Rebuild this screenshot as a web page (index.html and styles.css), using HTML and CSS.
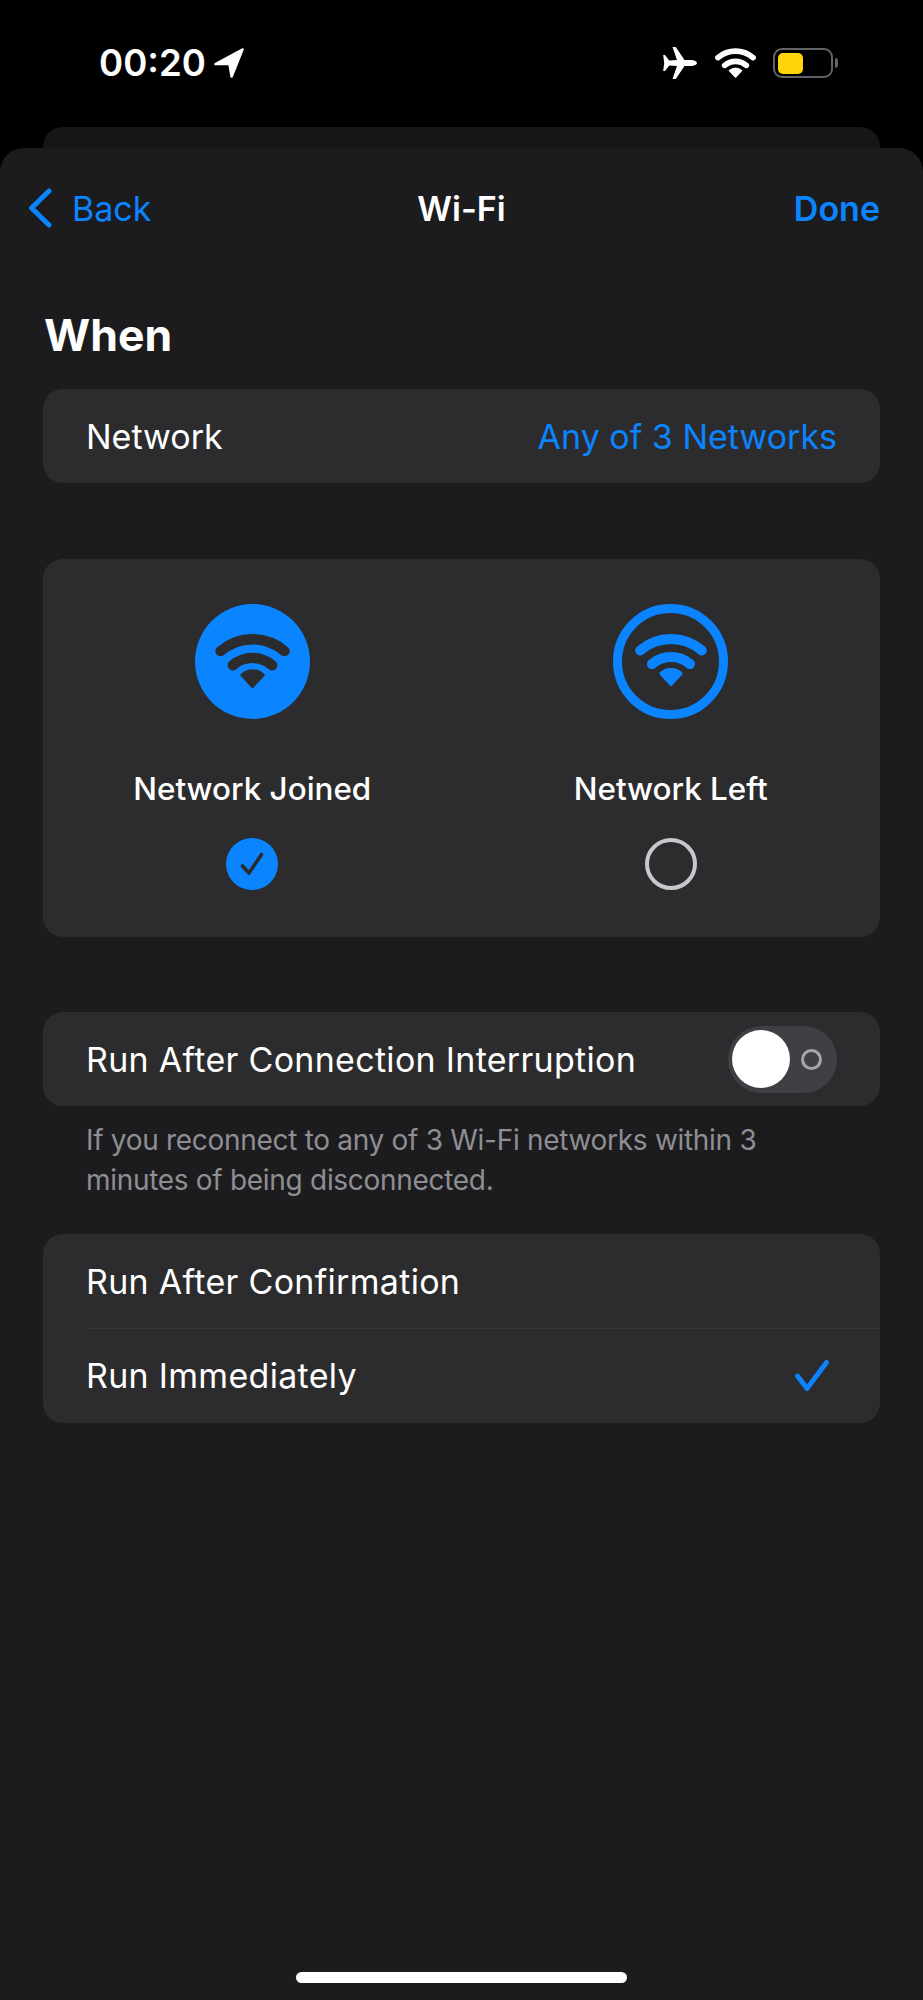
FILE: index.html
```html
<!DOCTYPE html>
<html lang="en">
<head>
    <meta charset="UTF-8">
    <meta name="viewport" content="width=device-width, initial-scale=1.0">
    <title>Wi-Fi</title>
    <link rel="stylesheet" href="styles.css">
</head>
<body>
    <svg class="defs" width="0" height="0">
        <symbol id="wifi" viewBox="0 0 72 52">
            <path d="M5.2 16.5A47 47 0 0 1 66.8 16.5" fill="none" stroke="currentColor" stroke-width="10" stroke-linecap="round"/>
            <path d="M17 30.1A29 29 0 0 1 55 30.1" fill="none" stroke="currentColor" stroke-width="10" stroke-linecap="round"/>
            <path d="M36 50.5L25.8 39.5A15 15 0 0 1 46.2 39.5Z" fill="currentColor" stroke="currentColor" stroke-width="3" stroke-linejoin="round"/>
        </symbol>
    </svg>

    <div class="status-bar">
        <div class="status-left">
            <span class="time">00:20</span>
            <svg class="location" viewBox="0 0 29 29"><path d="M27.5 1.5L1.5 15.5L15 15.5L17 27.5Z" fill="#fff" stroke="#fff" stroke-width="2.5" stroke-linejoin="round"/></svg>
        </div>
        <div class="status-right">
            <svg class="plane" viewBox="0 0 34 32"><path d="M34 16C34 14.3 30.5 13 28 13H21.5L12.8 0H9.5L14 13L6.2 13.5L2 8H.2L1.2 16L.2 24H2L6.2 18.5L14 19L9.5 32H12.8L21.5 19H28C30.5 19 34 17.7 34 16Z" fill="#fff"/></svg>
            <svg class="status-wifi"><use href="#wifi"/></svg>
            <div class="battery">
                <div class="battery-body"><div class="battery-level"></div></div>
                <div class="battery-cap"></div>
            </div>
        </div>
    </div>

    <div class="back-card"></div>

    <div class="sheet">
        <div class="nav">
            <div class="nav-back">
                <svg class="chevron" viewBox="0 0 24 40"><path d="M21 3L3.5 20L21 37" fill="none" stroke="#0a84ff" stroke-width="5" stroke-linecap="round" stroke-linejoin="round"/></svg>
                <span>Back</span>
            </div>
            <div class="nav-title">Wi-Fi</div>
            <div class="nav-done">Done</div>
        </div>

        <h2 class="heading">When</h2>

        <div class="group">
            <div class="row">
                <span>Network</span>
                <span class="row-value">Any of 3 Networks</span>
            </div>
        </div>

        <div class="group choice-card">
            <div class="choice">
                <div class="choice-icon filled"><svg><use href="#wifi"/></svg></div>
                <div class="choice-label">Network Joined</div>
                <div class="radio checked">
                    <svg viewBox="0 0 24 24"><path d="M2.5 14L9 21L21.5 2.5" fill="none" stroke="#2c2c2e" stroke-width="3.6" stroke-linecap="round" stroke-linejoin="round"/></svg>
                </div>
            </div>
            <div class="choice">
                <div class="choice-icon outline"><svg><use href="#wifi"/></svg></div>
                <div class="choice-label">Network Left</div>
                <div class="radio"></div>
            </div>
        </div>

        <div class="group">
            <div class="row">
                <span class="run-text">Run After Connection Interruption</span>
                <div class="toggle">
                    <div class="toggle-knob"></div>
                    <div class="toggle-off"></div>
                </div>
            </div>
        </div>
        <p class="footnote">If you reconnect to any of 3 Wi-Fi networks within 3 minutes of being disconnected.</p>

        <div class="group run-list">
            <div class="row with-line">
                <span class="run-text">Run After Confirmation</span>
            </div>
            <div class="row">
                <span class="run-text">Run Immediately</span>
                <svg class="tick" viewBox="0 0 34 31"><path d="M2.5 16L12 28.5L31.5 2.5" fill="none" stroke="#0a84ff" stroke-width="4.8" stroke-linecap="round" stroke-linejoin="round"/></svg>
            </div>
        </div>

        <div class="home-bar"></div>
    </div>
</body>
</html>
```

FILE: styles.css
```css
:root {
    --blue: #0a84ff;
    --sheet: #1c1c1e;
    --cell: #2c2c2e;
    --muted: #8e8e93;
}

* {
    box-sizing: border-box;
    margin: 0;
    padding: 0;
    font-family: 'Inter', sans-serif;
}

html, body {
    height: 2000px;
}

body {
    background: #000;
    color: #fff;
    display: flex;
    flex-direction: column;
    overflow: hidden;
}

.defs {
    display: block;
    height: 0;
}

/* status bar */
.status-bar {
    height: 127px;
    flex: none;
    padding: 0 85px 1px 99px;
    display: flex;
    align-items: center;
    justify-content: space-between;
}

.status-left {
    display: flex;
    align-items: center;
    gap: 8px;
}

.time {
    font-size: 36.6px;
    font-weight: 600;
    line-height: 40px;
}

.location {
    width: 30px;
    height: 30px;
}

.status-right {
    display: flex;
    align-items: center;
}

.plane {
    width: 34px;
    height: 32px;
    margin-right: 18px;
}

.status-wifi {
    width: 41px;
    height: 30px;
    color: #fff;
    margin-right: 17px;
}

.battery {
    display: flex;
    align-items: center;
    gap: 2px;
}

.battery-body {
    width: 60px;
    height: 30px;
    border: 2.5px solid #636366;
    border-radius: 9px;
    padding: 2.5px;
}

.battery-level {
    width: 25px;
    height: 100%;
    background: #ffd60a;
    border-radius: 5px;
}

.battery-cap {
    width: 3px;
    height: 10px;
    background: #636366;
    border-radius: 0 3px 3px 0;
}

.back-card {
    height: 21px;
    flex: none;
    margin: 0 43px;
    background: #161618;
    border-radius: 20px 20px 0 0;
}

/* sheet */
.sheet {
    flex: 1;
    background: var(--sheet);
    border-radius: 24px 24px 0 0;
    padding: 0 43px 17px;
    display: flex;
    flex-direction: column;
}

.nav {
    height: 120px;
    margin: 0 0 0 -15px;
    display: grid;
    grid-template-columns: 1fr auto 1fr;
    align-items: center;
    font-size: 34px;
}

.nav-back {
    display: flex;
    align-items: center;
    gap: 20px;
    color: var(--blue);
}

.chevron {
    width: 24px;
    height: 40px;
}

.nav-title {
    font-weight: 600;
    margin-left: 15px;
}

.nav-done {
    text-align: right;
    color: var(--blue);
    font-weight: 600;
}

.heading {
    margin: 40px 0 27px 1px;
    font-size: 44.5px;
    line-height: 54px;
    font-weight: 700;
}

.group {
    background: var(--cell);
    border-radius: 20px;
    overflow: hidden;
    flex: none;
}

.row {
    height: 94px;
    padding: 0 43px;
    display: flex;
    align-items: center;
    justify-content: space-between;
    font-size: 34px;
}

.row-value {
    color: var(--blue);
}

.run-text {
    letter-spacing: 0.3px;
}

/* joined / left card */
.choice-card {
    margin: 76px 0 75px;
    height: 378px;
    padding-top: 45px;
    display: grid;
    grid-template-columns: 1fr 1fr;
}

.choice {
    display: flex;
    flex-direction: column;
    align-items: center;
}

.choice-icon {
    width: 115px;
    height: 115px;
    border-radius: 50%;
    display: flex;
    align-items: center;
    justify-content: center;
}

.choice-icon.filled {
    background: var(--blue);
    color: var(--cell);
}

.choice-icon.filled svg {
    width: 75px;
    height: 54px;
    margin-bottom: 2px;
}

.choice-icon.outline {
    border: 9.5px solid var(--blue);
    color: var(--blue);
}

.choice-icon.outline svg {
    width: 72px;
    height: 52px;
    margin-bottom: 3px;
}

.choice-label {
    margin-top: 50px;
    font-size: 31.4px;
    line-height: 40px;
    font-weight: 450;
}

.radio {
    width: 52px;
    height: 52px;
    margin-top: 29px;
    border-radius: 50%;
    border: 4px solid #c7c7cc;
}

.radio.checked {
    border: none;
    background: var(--blue);
    padding: 14px;
}

.radio.checked svg {
    display: block;
    width: 24px;
    height: 24px;
}

/* toggle */
.toggle {
    width: 109px;
    height: 67px;
    border-radius: 34px;
    background: #3f3f44;
    padding: 0 15px 0 4px;
    display: flex;
    align-items: center;
    justify-content: space-between;
}

.toggle-knob {
    width: 58px;
    height: 58px;
    background: #fff;
    border-radius: 50%;
}

.toggle-off {
    width: 21px;
    height: 21px;
    border: 3px solid #a5a5aa;
    border-radius: 50%;
}

.footnote {
    margin: 15px 0 34px;
    padding: 0 43px;
    font-size: 28px;
    letter-spacing: -0.3px;
    line-height: 39.5px;
    color: var(--muted);
}

.run-list .row {
    height: 94.5px;
}

.with-line {
    position: relative;
}

.with-line::after {
    content: "";
    position: absolute;
    left: 43px;
    right: 0;
    bottom: 0;
    height: 1px;
    background: #3a3a3c;
}

.tick {
    width: 34px;
    height: 31px;
    margin-right: 8px;
}

.home-bar {
    width: 331px;
    height: 11px;
    margin: auto auto 0;
    background: #fff;
    border-radius: 6px;
}
```
